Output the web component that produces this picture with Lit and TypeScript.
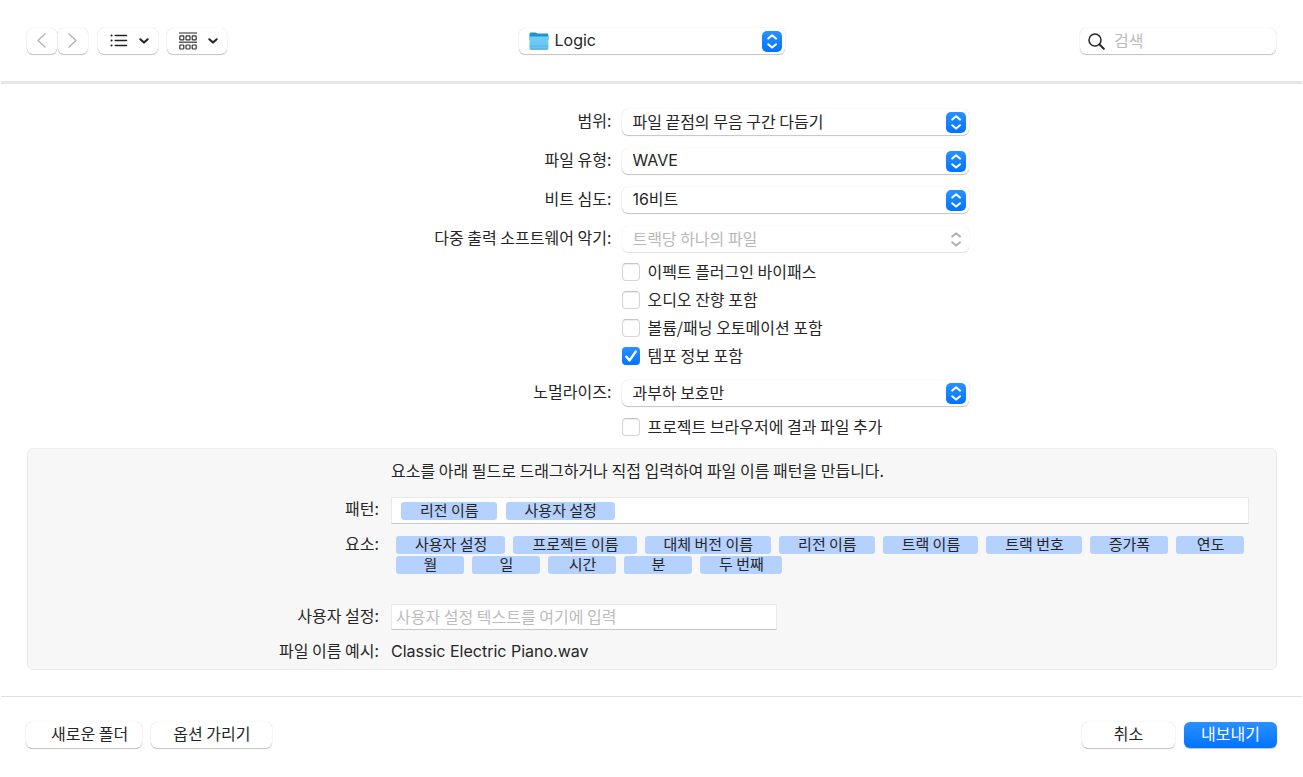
import { LitElement, html, css, svg, nothing } from "lit";
import { customElement, property, state } from "lit/decorators.js";

const controlBase = css`
  * {
    box-sizing: border-box;
  }
  button,
  input,
  select {
    font: inherit;
    color: inherit;
    margin: 0;
  }
  svg {
    display: block;
  }
`;

@customElement("popup-select")
class PopupSelect extends LitElement {
  @property() label = "";
  @property() value = "";
  @property({ type: Boolean }) disabled = false;
  @property({ type: Boolean }) folder = false;
  @property({ type: Boolean }) latin = false;

  static styles = [
    controlBase,
    css`
      :host {
        display: block;
      }
      .box {
        display: grid;
        align-items: center;
        height: 26px;
        border-radius: 6px;
        background: #fff;
        box-shadow: 0 0 1px rgba(0, 0, 0, 0.22), 0 1px 1px rgba(0, 0, 0, 0.22);
      }
      .box.disabled {
        color: #b9b9b9;
        box-shadow: 0 0 1px rgba(0, 0, 0, 0.14), 0 1px 1px rgba(0, 0, 0, 0.1);
      }
      select {
        grid-area: 1 / 1;
        width: 100%;
        height: 26px;
        padding: 0 32px 4px 10px;
        border: 0;
        border-radius: 6px;
        background: transparent;
        appearance: none;
        outline-offset: 1px;
      }
      select:disabled {
        opacity: 1;
      }
      .latin {
        font-family: Inter, "Noto Sans CJK KR", sans-serif;
        padding-bottom: 3px;
      }
      .folder-pad {
        padding-left: 36px;
      }
      .badge {
        grid-area: 1 / 1;
        justify-self: end;
        margin-right: 3px;
        width: 20px;
        height: 21px;
        border-radius: 5px;
        background: linear-gradient(#2b90ff, #0074ff);
        color: #fff;
        pointer-events: none;
      }
      .disabled .badge {
        background: none;
        color: #b0b0b0;
      }
      .folder {
        grid-area: 1 / 1;
        justify-self: start;
        margin-left: 10px;
        pointer-events: none;
      }
    `,
  ];

  render() {
    const cls = [this.latin ? "latin" : "", this.folder ? "folder-pad" : ""].join(" ");
    return html`
      <div class="box ${this.disabled ? "disabled" : ""}">
        <select class=${cls} aria-label=${this.label} ?disabled=${this.disabled}>
          <option>${this.value}</option>
        </select>
        ${this.folder
          ? html`<svg class="folder" width="20" height="18" viewBox="0 0 20 18" aria-hidden="true">
              <defs>
                <linearGradient id="front" x1="0" y1="0" x2="0" y2="1">
                  <stop offset="0" stop-color="#6fcdf6" />
                  <stop offset="1" stop-color="#66c5f0" />
                </linearGradient>
              </defs>
              <path d="M.5 1.8Q.5.5 1.8.5H6.4Q7.2.5 7.8 1.1L8.4 1.6H18.2Q19.4 1.6 19.4 2.9V8H.5Z" fill="#1f93cb" />
              <path d="M.5 4.4H19.4V16.2Q19.4 17.4 18.2 17.4H1.7Q.5 17.4.5 16.2Z" fill="url(#front)" />
              <path d="M.7 14H19.2" stroke="#4fb0de" stroke-width=".8" />
              <path d="M1.2 17.2H18.7" stroke="#3f9bc8" stroke-width=".8" />
            </svg>`
          : nothing}
        <svg class="badge" viewBox="0 0 20 21" aria-hidden="true" fill="none" stroke="currentColor"
          stroke-width="2" stroke-linecap="round" stroke-linejoin="round">
          <path d="M6.2 7.6L10.1 4.2L14 7.6M6.2 13.2L10.1 16.6L14 13.2" />
        </svg>
      </div>
    `;
  }
}

@customElement("check-row")
class CheckRow extends LitElement {
  @property() label = "";
  @property({ type: Boolean }) checked = false;

  static styles = [
    controlBase,
    css`
      :host {
        display: block;
      }
      label {
        display: inline-flex;
        align-items: center;
        gap: 7px;
        height: 28px;
        line-height: 24px;
      }
      .text {
        padding-bottom: 2px;
      }
      .tick {
        display: grid;
        width: 18px;
        height: 18px;
      }
      input {
        grid-area: 1 / 1;
        appearance: none;
        width: 18px;
        height: 18px;
        border: 1px solid #d6d6d6;
        border-top-color: #c4c4c4;
        border-radius: 4px;
        background: #fff;
        box-shadow: inset 0 1px 1px rgba(0, 0, 0, 0.08);
      }
      input:checked {
        border: 0;
        background: linear-gradient(#2b90ff, #0074ff);
        box-shadow: none;
      }
      svg {
        grid-area: 1 / 1;
        display: none;
        pointer-events: none;
      }
      input:checked + svg {
        display: block;
      }
    `,
  ];

  render() {
    return html`
      <label>
        <span class="tick">
          <input type="checkbox" .checked=${this.checked} />
          <svg width="18" height="18" viewBox="0 0 18 18" aria-hidden="true" fill="none" stroke="#fff"
            stroke-width="2.4" stroke-linecap="round" stroke-linejoin="round">
            <path d="M4.3 9.7L7.6 13.4L13.7 4.6" />
          </svg>
        </span>
        <span class="text">${this.label}</span>
      </label>
    `;
  }
}

const chevronDown = html`<svg width="10" height="6" viewBox="0 0 10 6" fill="none" stroke="#222"
  stroke-width="2" stroke-linecap="round" stroke-linejoin="round" aria-hidden="true">
  <path d="M1.3 1.2L5 4.6L8.7 1.2" />
</svg>`;

@customElement("app-root")
class AppRoot extends LitElement {
  @state() private elements = [
    "사용자 설정", "프로젝트 이름", "대체 버전 이름", "리전 이름", "트랙 이름", "트랙 번호",
    "증가폭", "연도", "월", "일", "시간", "분", "두 번째",
  ];
  @state() private pattern = ["리전 이름", "사용자 설정"];

  static styles = [
    controlBase,
    css`
      :host {
        display: flex;
        flex-direction: column;
        min-height: 100vh;
        background: #fff;
        color: #262626;
        font-family: "Noto Sans CJK KR", sans-serif;
        font-size: 16px;
        line-height: 24px;
      }
      .toolbar {
        display: grid;
        grid-template-columns: 1fr 266px 1fr;
        align-items: center;
        margin: 0 1px;
        padding: 28px 26px 27px;
        border-bottom: 3px solid #e6e6e6;
      }
      .tools {
        display: flex;
      }
      .search {
        justify-self: end;
        display: flex;
        align-items: center;
        width: 196px;
        height: 26px;
        padding: 0 8px;
        gap: 9px;
      }
      .search input {
        flex: 1;
        min-width: 0;
        height: 26px;
        padding: 0 0 3px;
        border: 0;
        background: transparent;
        outline: 0;
      }
      ::placeholder {
        color: #bcbcbc;
        opacity: 1;
      }
      .raised {
        border: 0;
        border-radius: 6px;
        background: #fff;
        box-shadow: 0 0 1px rgba(0, 0, 0, 0.22), 0 1px 1px rgba(0, 0, 0, 0.22);
      }
      .tool {
        display: flex;
        align-items: center;
        justify-content: center;
        height: 26px;
        padding: 0;
      }
      .nav {
        width: 30px;
        margin-right: 1px;
        padding: 0 2px 1px 0;
      }
      .view {
        width: 60px;
        gap: 11px;
        margin-left: 9px;
        padding-left: 2px;
      }
      .form {
        display: grid;
        grid-template-columns: 47% 347px;
        column-gap: 10px;
        row-gap: 13px;
        padding-top: 25px;
      }
      .label {
        padding-right: 1px;
        line-height: 22px;
        text-align: right;
      }
      .checks {
        grid-column: 2;
        margin: -7px 0 -3px;
      }
      .check-last {
        grid-column: 2;
        margin-top: -6px;
      }
      .panel {
        display: grid;
        grid-template-columns: 352px minmax(0, 1fr);
        column-gap: 11px;
        margin: 7px 26px 0 27px;
        padding: 9px 27px 6px 0;
        border: 1px solid #ebebeb;
        border-radius: 6px;
        background: #f7f7f7;
      }
      .hint {
        grid-column: 2;
        margin: 0 0 15px;
      }
      .field {
        background: #fff;
        border: 1px solid #e9e9e9;
        border-bottom-color: #c8c8c8;
        border-radius: 0;
      }
      .pattern {
        display: flex;
        align-items: center;
        gap: 9px;
        height: 27px;
        padding: 0 9px;
      }
      .pattern input {
        flex: 1;
        min-width: 0;
        height: 24px;
        border: 0;
        background: transparent;
        outline: 0;
      }
      .tokens {
        display: flex;
        flex-wrap: wrap;
        gap: 2px 8px;
        padding-left: 5px;
      }
      .elements {
        margin-top: 12px;
      }
      .elements-label {
        margin-top: 8px;
      }
      .token {
        height: 18px;
        min-width: 68px;
        padding: 0 18px 2px 19px;
        border: 0;
        border-radius: 3px;
        background: #b5d1fd;
        font-size: 15px;
        line-height: 16px;
        white-space: nowrap;
      }
      .custom {
        width: 386px;
        height: 26px;
        max-width: 100%;
        padding: 0 4px 3px;
      }
      .custom,
      .custom-label {
        margin-top: 30px;
      }
      .example {
        margin-top: 9px;
      }
      .latin {
        font-family: Inter, "Noto Sans CJK KR", sans-serif;
      }
      .footer {
        display: flex;
        gap: 9px;
        margin: 26px 1px 0;
        padding: 25px 25px 27px;
        border-top: 1px solid #e2e2e2;
      }
      .spacer {
        flex: 1;
      }
      .action {
        min-width: 93px;
        height: 26px;
        padding: 0 22px 4px;
        line-height: 22px;
      }
      .folder-action {
        padding: 0 14px 4px 25px;
      }
      .primary {
        padding: 0 16px 4px;
        background: linear-gradient(#2b90ff, #0074ff);
        color: #fff;
      }
    `,
  ];

  private token(name: string) {
    return html`<button class="token" type="button" draggable="true">${name}</button>`;
  }

  render() {
    return html`
      <header class="toolbar">
        <div class="tools">
          <button class="raised tool nav" aria-label="뒤로">
            <svg width="9" height="15" viewBox="0 0 9 15" fill="none" stroke="#b4b4b4" stroke-width="1.4"
              stroke-linecap="round" stroke-linejoin="round"><path d="M8 1L1 7.5L8 14" /></svg>
          </button>
          <button class="raised tool nav" aria-label="앞으로">
            <svg width="9" height="15" viewBox="0 0 9 15" fill="none" stroke="#b4b4b4" stroke-width="1.4"
              stroke-linecap="round" stroke-linejoin="round"><path d="M1 1L8 7.5L1 14" /></svg>
          </button>
          <button class="raised tool view" aria-label="목록 보기">
            <svg width="18" height="14" viewBox="0 0 18 14" fill="none" stroke="#222" stroke-width="1.3"
              stroke-linecap="round">
              <path d="M5.2 1.5H16.6M5.2 6.5H16.6M5.2 11.5H16.6" />
              <path d="M1.5 1.5H1.6M1.5 6.5H1.6M1.5 11.5H1.6" stroke-width="2" />
            </svg>
            ${chevronDown}
          </button>
          <button class="raised tool view" aria-label="그룹 보기">
            <svg width="18" height="18" viewBox="0 0 18 18" fill="none" stroke="#333" stroke-width="1.2">
              <path d="M0 1H18" stroke="#777" stroke-width="1.6" />
              <path d="M0 10.2H18" />
              ${[3.9, 13].map((y) =>
                [0.8, 7, 13.2].map((x) => svg`<rect x=${x} y=${y} width="4" height="4" rx=".7" />`),
              )}
            </svg>
            ${chevronDown}
          </button>
        </div>
        <popup-select label="위치" value="Logic" folder latin></popup-select>
        <div class="search raised">
          <svg width="17" height="17" viewBox="0 0 17 17" fill="none" stroke="#262626" aria-hidden="true">
            <circle cx="7" cy="7" r="6" stroke-width="1.5" />
            <path d="M11.4 11.4L15.8 15.8" stroke-width="2" stroke-linecap="round" />
          </svg>
          <input type="text" aria-label="검색" placeholder="검색" />
        </div>
      </header>

      <main>
        <div class="form">
          <div class="label">범위:</div>
          <popup-select label="범위" value="파일 끝점의 무음 구간 다듬기"></popup-select>
          <div class="label">파일 유형:</div>
          <popup-select label="파일 유형" value="WAVE" latin></popup-select>
          <div class="label">비트 심도:</div>
          <popup-select label="비트 심도" value="16비트" latin></popup-select>
          <div class="label">다중 출력 소프트웨어 악기:</div>
          <popup-select label="다중 출력 소프트웨어 악기" value="트랙당 하나의 파일" disabled></popup-select>
          <div class="checks">
            <check-row label="이펙트 플러그인 바이패스"></check-row>
            <check-row label="오디오 잔향 포함"></check-row>
            <check-row label="볼륨/패닝 오토메이션 포함"></check-row>
            <check-row label="템포 정보 포함" checked></check-row>
          </div>
          <div class="label">노멀라이즈:</div>
          <popup-select label="노멀라이즈" value="과부하 보호만"></popup-select>
          <check-row class="check-last" label="프로젝트 브라우저에 결과 파일 추가"></check-row>
        </div>

        <section class="panel">
          <p class="hint">요소를 아래 필드로 드래그하거나 직접 입력하여 파일 이름 패턴을 만듭니다.</p>
          <label class="label" for="pattern">패턴:</label>
          <div class="field pattern">
            ${this.pattern.map((name) => this.token(name))}
            <input id="pattern" type="text" />
          </div>
          <div class="label elements-label">요소:</div>
          <div class="tokens elements">${this.elements.map((name) => this.token(name))}</div>
          <label class="label custom-label" for="custom">사용자 설정:</label>
          <input class="field custom" id="custom" type="text" placeholder="사용자 설정 텍스트를 여기에 입력" />
          <div class="label example">파일 이름 예시:</div>
          <div class="example latin">Classic Electric Piano.wav</div>
        </section>
      </main>

      <footer class="footer">
        <button class="raised action folder-action">새로운 폴더</button>
        <button class="raised action">옵션 가리기</button>
        <span class="spacer"></span>
        <button class="raised action">취소</button>
        <button class="raised action primary">내보내기</button>
      </footer>
    `;
  }
}
